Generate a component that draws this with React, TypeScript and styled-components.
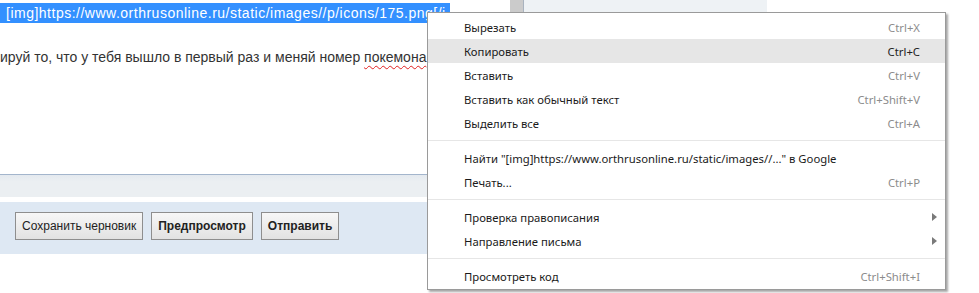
import styled, { createGlobalStyle } from "styled-components";

const GlobalStyle = createGlobalStyle`
  html, body {
    margin: 0;
    padding: 0;
    background: #ffffff;
    overflow: hidden;
  }
`;

type MenuEntry =
  | { kind: "item"; label: string; shortcut?: string; active?: boolean; submenu?: boolean }
  | { kind: "separator" };

const menuEntries: MenuEntry[] = [
  { kind: "item", label: "Вырезать", shortcut: "Ctrl+X" },
  { kind: "item", label: "Копировать", shortcut: "Ctrl+C", active: true },
  { kind: "item", label: "Вставить", shortcut: "Ctrl+V" },
  { kind: "item", label: "Вставить как обычный текст", shortcut: "Ctrl+Shift+V" },
  { kind: "item", label: "Выделить все", shortcut: "Ctrl+A" },
  { kind: "separator" },
  { kind: "item", label: 'Найти "[img]https://www.orthrusonline.ru/static/images//..." в Google' },
  { kind: "item", label: "Печать...", shortcut: "Ctrl+P" },
  { kind: "separator" },
  { kind: "item", label: "Проверка правописания", submenu: true },
  { kind: "item", label: "Направление письма", submenu: true },
  { kind: "separator" },
  { kind: "item", label: "Просмотреть код", shortcut: "Ctrl+Shift+I" },
];

function App() {
  return (
    <Page>
      <GlobalStyle />
      <Workspace>
        <EditorColumn>
          <TextArea>
            <Line>
              <Selected>[img]https://www.orthrusonline.ru/static/images//p/icons/175.png[/i</Selected>
            </Line>
            <Line />
            <Line>
              ируй то, что у тебя вышло в первый раз и меняй номер <Misspelled>покемона</Misspelled>
            </Line>
          </TextArea>
          <StatusStrip />
          <ButtonPanel>
            <FormButton>Сохранить черновик</FormButton>
            <FormButton $primary>Предпросмотр</FormButton>
            <FormButton $primary>Отправить</FormButton>
          </ButtonPanel>
        </EditorColumn>
        <ScrollBar />
        <Sidebar />
      </Workspace>

      <ContextMenu>
        {menuEntries.map((entry, i) =>
          entry.kind === "separator" ? (
            <Separator key={i} />
          ) : (
            <MenuRow key={i} $active={entry.active}>
              <MenuLabel>{entry.label}</MenuLabel>
              {entry.shortcut && <Shortcut $active={entry.active}>{entry.shortcut}</Shortcut>}
              <ArrowSlot>{entry.submenu && <Arrow />}</ArrowSlot>
            </MenuRow>
          )
        )}
      </ContextMenu>
    </Page>
  );
}

// STYLING
const Page = styled.div`
    position: relative;
    width: 979px;
    height: 293px;
    overflow: hidden;
    background: #ffffff;
`;

const Workspace = styled.div`
    display: flex;
    align-items: flex-start;
`;

const EditorColumn = styled.div`
    display: flex;
    flex-direction: column;
    width: 510px;
`;

const TextArea = styled.div`
    box-sizing: border-box;
    height: 175px;
    padding-top: 2px;
    background: #ffffff;
    border-bottom: 1px solid #a3b5cc;
    font-family: "Liberation Sans", Arial, sans-serif;
    font-size: 14px;
    color: #333333;
    white-space: nowrap;
    overflow: hidden;
`;

const Line = styled.div`
    height: 22px;
    line-height: 22px;
`;

const Selected = styled.span`
    background: #3390ff;
    color: #ffffff;
    letter-spacing: 0.5px;
    padding: 2px 4px 2px 6px;
`;

const Misspelled = styled.span`
    text-decoration: underline wavy #e02020;
    text-decoration-thickness: 1px;
    text-underline-offset: 3px;
`;

const StatusStrip = styled.div`
    height: 22px;
    background: linear-gradient(#e4e9ef, #ebeff2 30%, #ebeff2);
`;

const ButtonPanel = styled.div`
    display: flex;
    align-items: flex-start;
    gap: 8px;
    box-sizing: border-box;
    height: 52px;
    margin-top: 5px;
    padding: 10px 15px 0;
    background: #dee8f3;
`;

const FormButton = styled.button<{ $primary?: boolean }>`
    height: 28px;
    padding: 0 6px;
    border: 1px solid #8e8e8e;
    border-radius: 0;
    background: linear-gradient(#f7f7f7, #e2e2e2);
    font-family: "Liberation Sans", Arial, sans-serif;
    font-size: 12px;
    font-weight: ${(p) => (p.$primary ? 700 : 400)};
    color: #222222;
`;

const ScrollBar = styled.div`
    width: 13px;
    height: 175px;
    background: #cbcbcb;
`;

const Sidebar = styled.div`
    width: 243px;
    height: 175px;
    border-left: 1px solid #a9b3bf;
    background: #eef2f5;
`;

const ContextMenu = styled.div`
    position: absolute;
    left: 427px;
    top: 12px;
    box-sizing: border-box;
    width: 519px;
    padding: 2px 0 1px;
    background: #ffffff;
    border: 1px solid #9a9a9a;
    box-shadow: 2px 2px 2px rgba(0, 0, 0, 0.35);
    font-family: "Noto Sans", "Open Sans", sans-serif;
    font-size: 11.3px;
    color: #1a1a1a;
`;

const MenuRow = styled.div<{ $active?: boolean }>`
    display: flex;
    align-items: center;
    height: 24px;
    padding-left: 36px;
    background: ${(p) => (p.$active ? "#e6e6e6" : "transparent")};
    white-space: nowrap;
`;

const MenuLabel = styled.span`
    flex: 1;
`;

const Shortcut = styled.span<{ $active?: boolean }>`
    color: ${(p) => (p.$active ? "#222222" : "#8c8c8c")};
`;

const ArrowSlot = styled.span`
    display: flex;
    align-items: center;
    width: 25px;
    padding-left: 12px;
    box-sizing: border-box;
`;

const Arrow = styled.span`
    width: 0;
    height: 0;
    border-top: 4px solid transparent;
    border-bottom: 4px solid transparent;
    border-left: 5px solid #7a7a7a;
`;

const Separator = styled.div`
    height: 1px;
    margin: 5px 0;
    background: #e6e6e6;
`;

export default App;
